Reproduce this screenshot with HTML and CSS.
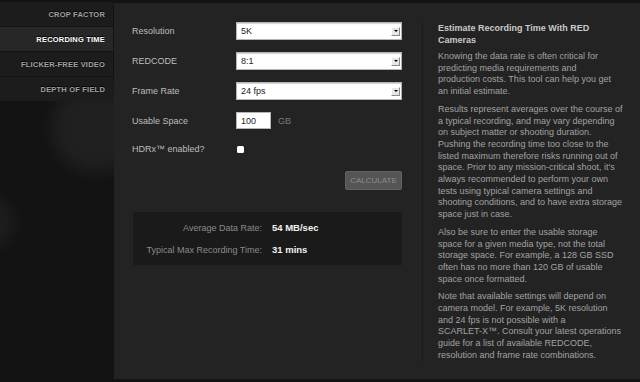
FILE: index.html
```html
<!DOCTYPE html>
<html lang="en">
<head>
<meta charset="utf-8">
<title>Estimate Recording Time</title>
<link rel="stylesheet" href="styles.css">
</head>
<body>
<div class="page">
  <nav class="sidebar">
    <a class="tab">CROP FACTOR</a>
    <a class="tab active">RECORDING TIME</a>
    <a class="tab">FLICKER-FREE VIDEO</a>
    <a class="tab">DEPTH OF FIELD</a>
  </nav>
  <main class="panel">
    <section class="calc">
      <div class="row">
        <label class="label">Resolution</label>
        <div class="select"><span class="value">5K</span><i class="arrow"></i></div>
      </div>
      <div class="row">
        <label class="label">REDCODE</label>
        <div class="select"><span class="value">8:1</span><i class="arrow"></i></div>
      </div>
      <div class="row">
        <label class="label">Frame Rate</label>
        <div class="select"><span class="value">24 fps</span><i class="arrow"></i></div>
      </div>
      <div class="row row-input">
        <label class="label">Usable Space</label>
        <div class="input">100</div>
        <span class="unit">GB</span>
      </div>
      <div class="row row-check">
        <label class="label">HDRx™ enabled?</label>
        <span class="checkbox"></span>
      </div>
      <div class="actions">
        <button class="calc-btn" type="button">CALCULATE</button>
      </div>
      <div class="results">
        <div class="result"><span class="rlabel">Average Data Rate:</span><span class="rval">54 MB/sec</span></div>
        <div class="result"><span class="rlabel">Typical Max Recording Time:</span><span class="rval">31 mins</span></div>
      </div>
    </section>
    <aside class="info">
      <h2 class="info-title">Estimate Recording Time With RED<br>Cameras</h2>
      <p>Knowing the data rate is often critical for<br>predicting media requirements and<br>production costs. This tool can help you get<br>an initial estimate.</p>
      <p>Results represent averages over the course of<br>a typical recording, and may vary depending<br>on subject matter or shooting duration.<br>Pushing the recording time too close to the<br>listed maximum therefore risks running out of<br>space. Prior to any mission-critical shoot, it's<br>always recommended to perform your own<br>tests using typical camera settings and<br>shooting conditions, and to have extra storage<br>space just in case.</p>
      <p>Also be sure to enter the usable storage<br>space for a given media type, not the total<br>storage space. For example, a 128 GB SSD<br>often has no more than 120 GB of usable<br>space once formatted.</p>
      <p>Note that available settings will depend on<br>camera model. For example, 5K resolution<br>and 24 fps is not possible with a<br>SCARLET-X™. Consult your latest operations<br>guide for a list of available REDCODE,<br>resolution and frame rate combinations.</p>
    </aside>
  </main>
</div>
</body>
</html>
```
FILE: styles.css
```css
html, body {
  margin: 0;
  padding: 0;
}
body {
  width: 640px;
  height: 382px;
  overflow: hidden;
  background-color: #131313;
  background-image:
    radial-gradient(circle at 96px 128px, #202020 0, #1f1f1f 34px, #141414 52px, rgba(19,19,19,0) 56px),
    radial-gradient(circle at -12px 222px, #1d1d1d 0, #1c1c1c 18px, rgba(19,19,19,0) 34px);
  font-family: "Liberation Sans", Arial, sans-serif;
}
.page {
  display: flex;
  height: 382px;
}
.sidebar {
  width: 113px;
  flex: none;
  padding-top: 2px;
  display: flex;
  flex-direction: column;
  gap: 1px;
}
.tab {
  height: 24px;
  display: flex;
  align-items: center;
  justify-content: flex-end;
  padding-right: 8px;
  background: #1c1c1c;
  color: #a2a2a2;
  font-size: 7.5px;
  font-weight: bold;
  letter-spacing: 0.2px;
  text-shadow: 0 -1px 0 #000;
}
.tab.active {
  background: #272727;
  color: #ffffff;
}
.panel {
  flex: 1;
  margin: 3px 0 3px 1px;
  background: #232323;
  display: flex;
  gap: 20px;
  padding: 19px 16px 0 18px;
}
.calc {
  width: 270px;
  flex: none;
}
.row {
  display: flex;
  align-items: center;
  height: 18px;
  margin-bottom: 12px;
}
.label {
  width: 104px;
  flex: none;
  font-size: 9px;
  color: #bdbdbd;
}
.select {
  width: 166px;
  height: 18px;
  box-sizing: border-box;
  background: #ffffff;
  border: 1px solid #b5b5b5;
  box-shadow: inset 0 1px 1px rgba(0,0,0,0.18);
  display: flex;
  align-items: center;
  padding-left: 4px;
  padding-right: 1px;
}
.value {
  flex: 1;
  font-size: 9px;
  color: #222;
}
.arrow {
  width: 9px;
  height: 9px;
  box-sizing: border-box;
  background: #e6e6e6;
  border-top: 1px solid #fff;
  border-left: 1px solid #fff;
  border-right: 1px solid #8a8a8a;
  border-bottom: 1px solid #8a8a8a;
  display: flex;
  justify-content: center;
  padding-top: 2px;
}
.arrow::before {
  content: "";
  display: block;
  width: 0;
  height: 0;
  border-left: 2px solid transparent;
  border-right: 2px solid transparent;
  border-top: 2px solid #000;
}
.row-input {
  height: 17px;
}
.input {
  width: 35px;
  height: 17px;
  box-sizing: border-box;
  background: #fff;
  border: 1px solid #b5b5b5;
  padding-left: 4px;
  font-size: 9px;
  color: #222;
  display: flex;
  align-items: center;
}
.unit {
  margin-left: 7px;
  font-size: 9px;
  color: #7a7a7a;
}
.row-check {
  height: 16px;
  margin-bottom: 14px;
}
.checkbox {
  width: 7px;
  height: 7px;
  margin-left: 1px;
  background: #fff;
  border-radius: 1.5px;
}
.actions {
  display: flex;
  justify-content: flex-end;
}
.calc-btn {
  width: 57px;
  height: 19px;
  box-sizing: border-box;
  background: #555555;
  border: 1px solid #626262;
  border-radius: 2px;
  color: #8c8c8c;
  font-family: "Liberation Sans", Arial, sans-serif;
  font-size: 8px;
  padding: 0;
}
.results {
  margin-top: 22px;
  margin-left: 1px;
  background: #1a1a1a;
  padding: 10px 0 9px;
}
.result {
  display: flex;
  gap: 10px;
  line-height: 12px;
}
.result + .result {
  margin-top: 10px;
}
.rlabel {
  width: 129px;
  text-align: right;
  font-size: 9px;
  color: #8a8a8a;
}
.rval {
  font-size: 9.5px;
  font-weight: bold;
  color: #f2f2f2;
}
.info {
  align-self: flex-start;
  border-left: 1px solid #1a1a1a;
  padding-left: 15px;
  font-size: 9px;
  line-height: 11.7px;
  color: #a2a2a2;
  white-space: nowrap;
}
.info-title {
  margin: 0;
  font-size: 9px;
  line-height: 12px;
  font-weight: bold;
  color: #cacaca;
}
.info p {
  margin: 5px 0 0;
}
.info p + p {
  margin-top: 6px;
}
```
